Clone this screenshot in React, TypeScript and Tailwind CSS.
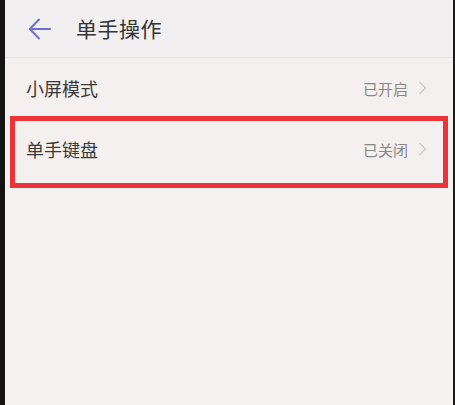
import React from "react";

const font = { fontFamily: '"Noto Sans CJK SC", "Noto Sans", sans-serif' };

function Chevron() {
  return (
    <svg width="9" height="14" viewBox="0 0 9 14" className="ml-[10px]">
      <path d="M1.5 1 L7.5 7 L1.5 13" fill="none" stroke="#cfcaca" strokeWidth="1.3" />
    </svg>
  );
}

export default function App() {
  return (
    <div
      className="w-[455px] h-[405px] flex bg-[#f4f0f0] overflow-hidden"
      style={font}
    >
      <div className="w-[5px] bg-[#141414]" />
      <div className="flex-1 flex flex-col">
        <div className="h-[58px] flex items-center pl-[23px] border-b border-[#e6e2e2] bg-[#f1eff0]">
          <svg width="24" height="24" viewBox="0 0 24 24">
            <path
              d="M22 12 H2 M11 2.5 L1.8 12 L11 21.5"
              fill="none"
              stroke="#6e70cf"
              strokeWidth="2"
              strokeLinecap="round"
              strokeLinejoin="round"
            />
          </svg>
          <span className="ml-[24px] text-[21px] text-[#353535] leading-none tracking-[0.5px]">
            单手操作
          </span>
        </div>
        <div className="h-[58px] flex items-center pl-[21px] pr-[26px] pt-[2px]">
          <span className="text-[18px] text-[#3a3a3a] leading-none">小屏模式</span>
          <span className="ml-auto text-[15px] text-[#8a8787] leading-none">已开启</span>
          <Chevron />
        </div>
        <div className="mx-[5px] h-[72px] border-[5px] border-[#ea3439] flex items-center pl-[11px] pr-[16px] pb-[6px]">
          <span className="text-[18px] text-[#3a3a3a] leading-none">单手键盘</span>
          <span className="ml-auto text-[15px] text-[#8a8787] leading-none">已关闭</span>
          <Chevron />
        </div>
        <div className="flex-1 bg-[#f5f2f2]" />
      </div>
      <div className="w-[2px] bg-[#1a1a1a]" />
    </div>
  );
}
